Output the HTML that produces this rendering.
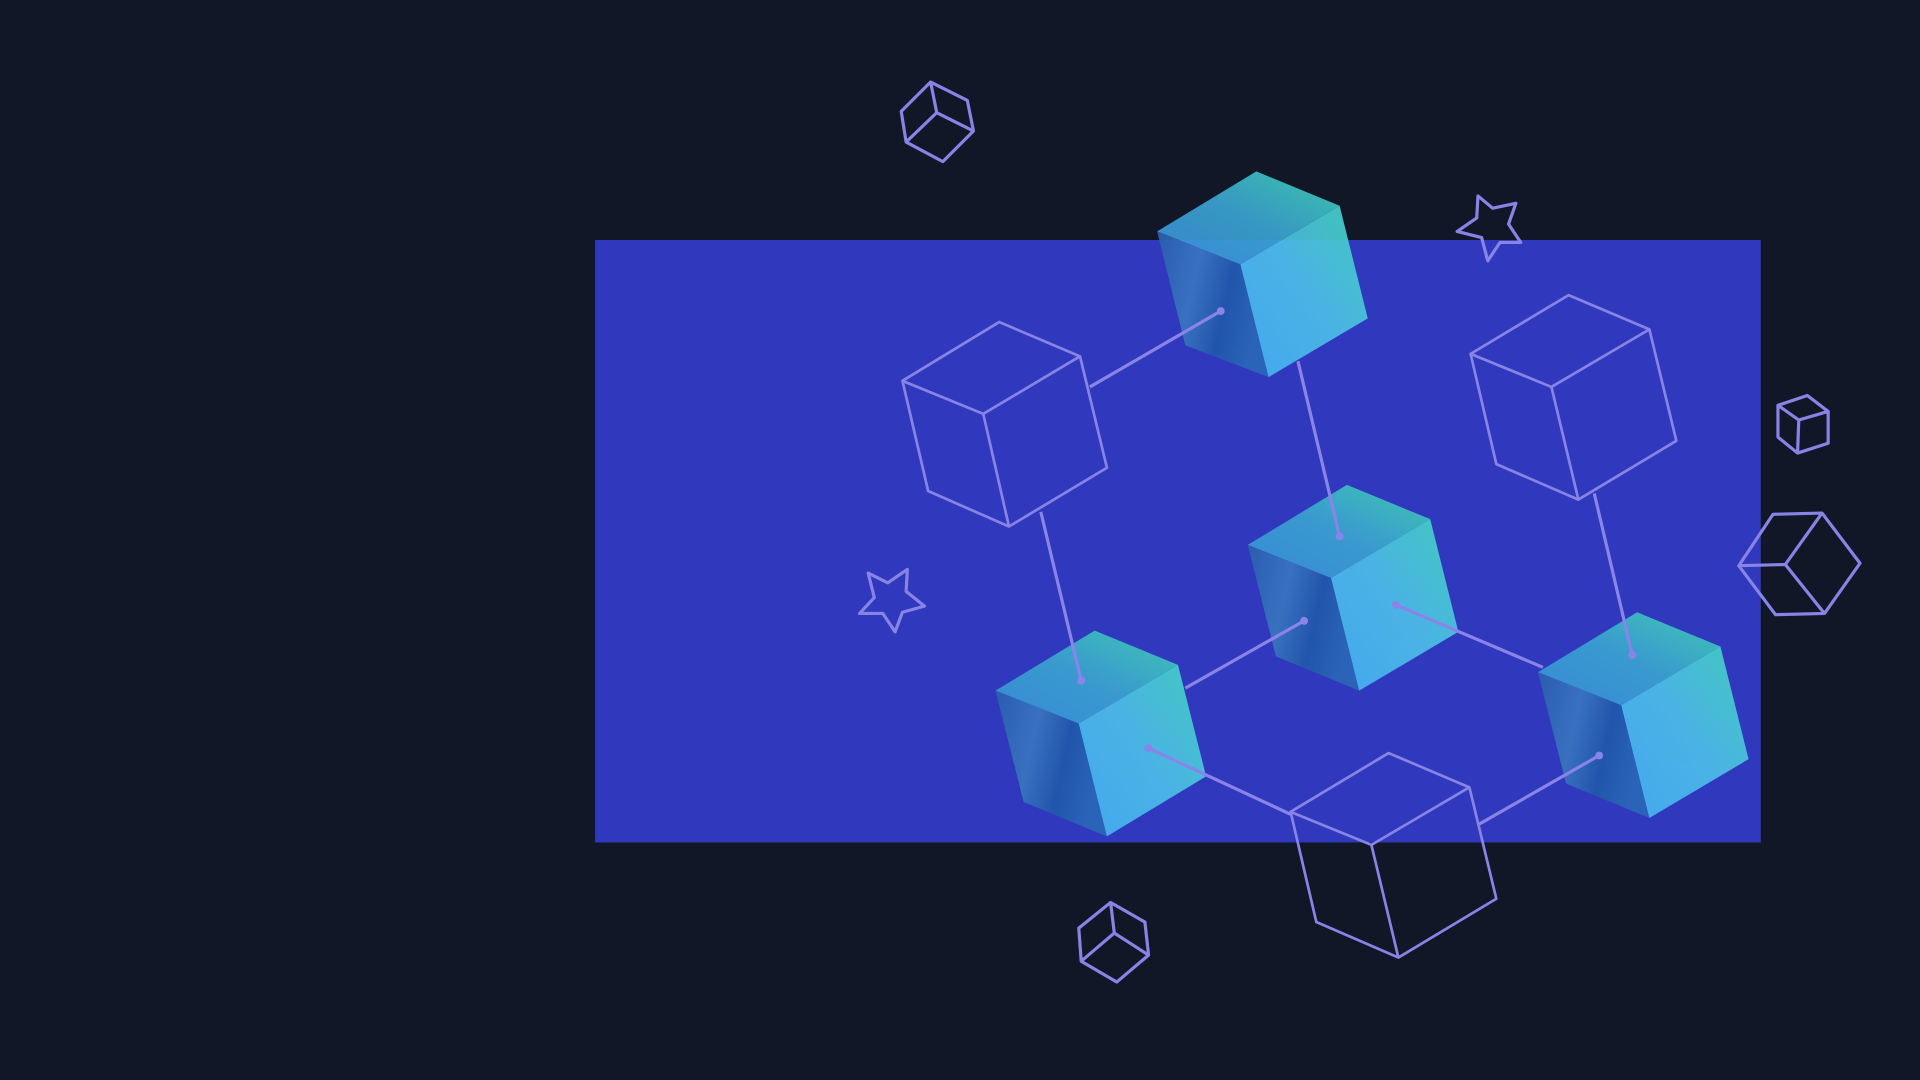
<!DOCTYPE html>
<html><head><style>html,body{margin:0;padding:0;background:#111726;}svg{display:block}</style></head>
<body>
<svg width="1920" height="1080" viewBox="0 0 1568 882" xmlns="http://www.w3.org/2000/svg">
<defs>
<linearGradient id="top" x1="0" y1="1" x2="1" y2="0"><stop offset="0" stop-color="#3a8fd9"/><stop offset="0.5" stop-color="#3aa2d0"/><stop offset="1" stop-color="#40d2b4"/></linearGradient>
<linearGradient id="left" x1="0" y1="0" x2="1" y2="0.3"><stop offset="0" stop-color="#2a5fb0"/><stop offset="0.4" stop-color="#3a76c0"/><stop offset="0.7" stop-color="#2158ab"/><stop offset="1" stop-color="#2a68b8"/></linearGradient>
<linearGradient id="right" x1="0" y1="1" x2="1" y2="0"><stop offset="0" stop-color="#46b0f4"/><stop offset="0.5" stop-color="#4cbce8"/><stop offset="1" stop-color="#44d4c0"/></linearGradient>
</defs>
<rect width="1568" height="882" fill="#111726"/>
<rect x="486" y="196" width="952" height="492" fill="#3039bd"/>
<g fill="none" stroke="#8784e6" stroke-width="2.2" stroke-linejoin="round">
<path d="M816,263 L882,291 L803,338 L737,311 Z M737,311 L758,401 L824,430 L904,382 L882,291 M803,338 L824,430"/>
<path d="M1281,241 L1347,269 L1267,316 L1201,289 Z M1201,289 L1222,379 L1289,408 L1369,360 L1347,269 M1267,316 L1289,408"/>
<path d="M1134,615 L1200,643 L1120,690 L1054,663 Z M1054,663 L1075,753 L1142,782 L1222,734 L1200,643 M1120,690 L1142,782"/>
<path d="M760,67 L790,82 L795,107 L770,132 L740,116 L736,91 Z M760,67 L765,92 L795,107 M765,92 L740,116" stroke-width="2.6"/>
<path d="M907,737 L935,753 L938,780 L912,802 L883,785 L881,758 Z M907,737 L910,762 L938,780 M910,762 L883,785" stroke-width="2.6"/>
<path d="M1452,331 L1476,323 L1493,336 L1493,362 L1468,370 L1452,357 Z M1452,331 L1469,343 L1493,336 M1469,343 L1468,370" stroke-width="2.6"/>
<path d="M1420,462 L1448,420 L1488,419 L1519,460 L1490,501 L1450,502 Z M1420,462 L1458,461 L1488,419 M1458,461 L1490,501" stroke-width="2.6"/>
<path d="M1207,160 L1219,170 L1238,166 L1232,183 L1242,198 L1225,198 L1215,213 L1210,194 L1190,189 L1206,178 Z" stroke-width="2.6"/>
<path d="M741,465 L740,483 L755,495 L737,500 L731,516 L721,501 L702,501 L714,488 L709,468 L725,476 Z" stroke-width="2.6"/>
</g>
<g opacity="0.93">
<g><path d="M1026,140 L1094,168 L1013,216 L945,189Z" fill="url(#top)"/><path d="M945,189 L1013,216 L1036,308 L968,282Z" fill="url(#left)"/><path d="M1013,216 L1094,168 L1117,260 L1036,308Z" fill="url(#right)"/></g>
<g><path d="M1100,396 L1168,424 L1087,472 L1019,445Z" fill="url(#top)"/><path d="M1019,445 L1087,472 L1110,564 L1042,536Z" fill="url(#left)"/><path d="M1087,472 L1168,424 L1191,516 L1110,564Z" fill="url(#right)"/></g>
<g><path d="M894,515 L962,543 L881,591 L813,564Z" fill="url(#top)"/><path d="M813,564 L881,591 L904,683 L836,655Z" fill="url(#left)"/><path d="M881,591 L962,543 L985,634 L904,683Z" fill="url(#right)"/></g>
<g><path d="M1337,500 L1405,528 L1324,576 L1256,549Z" fill="url(#top)"/><path d="M1256,549 L1324,576 L1347,668 L1279,640Z" fill="url(#left)"/><path d="M1324,576 L1405,528 L1428,620 L1347,668Z" fill="url(#right)"/></g>
</g>
<g stroke="#8b84e8" stroke-width="2.6" fill="#8b84e8">
<line x1="890" y1="316" x2="997" y2="254"/><circle cx="997" cy="254" r="3.2" stroke="none"/>
<line x1="1060" y1="295" x2="1094" y2="438"/><circle cx="1094" cy="438" r="3.2" stroke="none"/>
<line x1="850" y1="418" x2="883" y2="556"/><circle cx="883" cy="556" r="3.2" stroke="none"/>
<line x1="968" y1="562" x2="1065" y2="507"/><circle cx="1065" cy="507" r="3.2" stroke="none"/>
<line x1="1140" y1="494" x2="1260" y2="545"/><circle cx="1140" cy="494" r="3.2" stroke="none"/>
<line x1="938" y1="611" x2="1054" y2="665"/><circle cx="938" cy="611" r="3.2" stroke="none"/>
<line x1="1208" y1="673" x2="1306" y2="617"/><circle cx="1306" cy="617" r="3.2" stroke="none"/>
<line x1="1302" y1="403" x2="1333" y2="535"/><circle cx="1333" cy="535" r="3.2" stroke="none"/>
</g>
</svg>
</body></html>
